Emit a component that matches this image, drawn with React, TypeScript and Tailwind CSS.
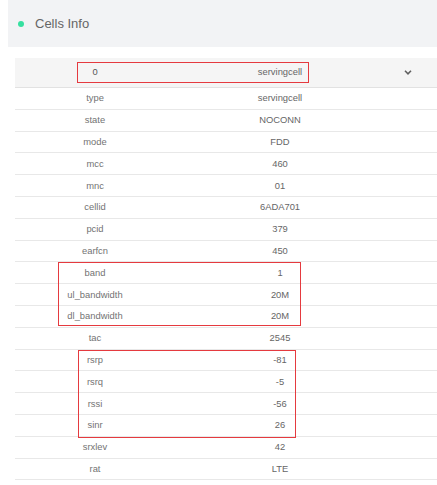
import React from 'react';

const rows: [string, string][] = [
  ['type', 'servingcell'],
  ['state', 'NOCONN'],
  ['mode', 'FDD'],
  ['mcc', '460'],
  ['mnc', '01'],
  ['cellid', '6ADA701'],
  ['pcid', '379'],
  ['earfcn', '450'],
  ['band', '1'],
  ['ul_bandwidth', '20M'],
  ['dl_bandwidth', '20M'],
  ['tac', '2545'],
  ['rsrp', '-81'],
  ['rsrq', '-5'],
  ['rssi', '-56'],
  ['sinr', '26'],
  ['srxlev', '42'],
  ['rat', 'LTE'],
];

const ChevronDown = () => (
  <svg width="8" height="5" viewBox="0 0 8 5" fill="none">
    <path d="M1 0.8l3 3 3-3" stroke="#606060" strokeWidth="1.6" />
  </svg>
);

export default function App() {
  return (
    <div className="relative w-[437px] h-[485px] overflow-hidden bg-white font-['Liberation_Sans',Arial,sans-serif]">
      {/* Section title */}
      <div className="ml-2 h-[47px] bg-[#f2f3f5] flex items-center pl-[10px]">
        <span className="w-[6px] h-[6px] rounded-full bg-[#36e0a0]" />
        <span className="ml-[11px] text-[13px] text-[#666]">Cells Info</span>
      </div>

      {/* Table */}
      <div className="mt-[11px] ml-[15px] w-[440px] text-[9.4px]">
        <div className="h-[30px] bg-[#f5f5f5] border-b border-[#e2e2e2] grid grid-cols-[160px_210px_1fr] items-center">
          <span className="text-center text-[#555]">0</span>
          <span className="text-center text-[#666]">servingcell</span>
          <span className="flex pl-[19px]">
            <ChevronDown />
          </span>
        </div>
        {rows.map(([k, v]) => (
          <div
            key={k}
            className="h-[21.8px] border-b border-[#e8e8e8] grid grid-cols-[160px_210px_1fr] items-center"
          >
            <span className="text-center text-[#737373]">{k}</span>
            <span className="text-center text-[#666]">{v}</span>
            <span />
          </div>
        ))}
      </div>

      {/* Annotation boxes */}
      <div className="absolute left-[77px] top-[62px] w-[232px] h-[21px] border-[1.5px] border-[#e53a3f]" />
      <div className="absolute left-[58px] top-[262px] w-[243px] h-[64px] border-[1.5px] border-[#e53a3f]" />
      <div className="absolute left-[78px] top-[350px] w-[218px] h-[88px] border-[1.5px] border-[#e53a3f]" />
    </div>
  );
}
